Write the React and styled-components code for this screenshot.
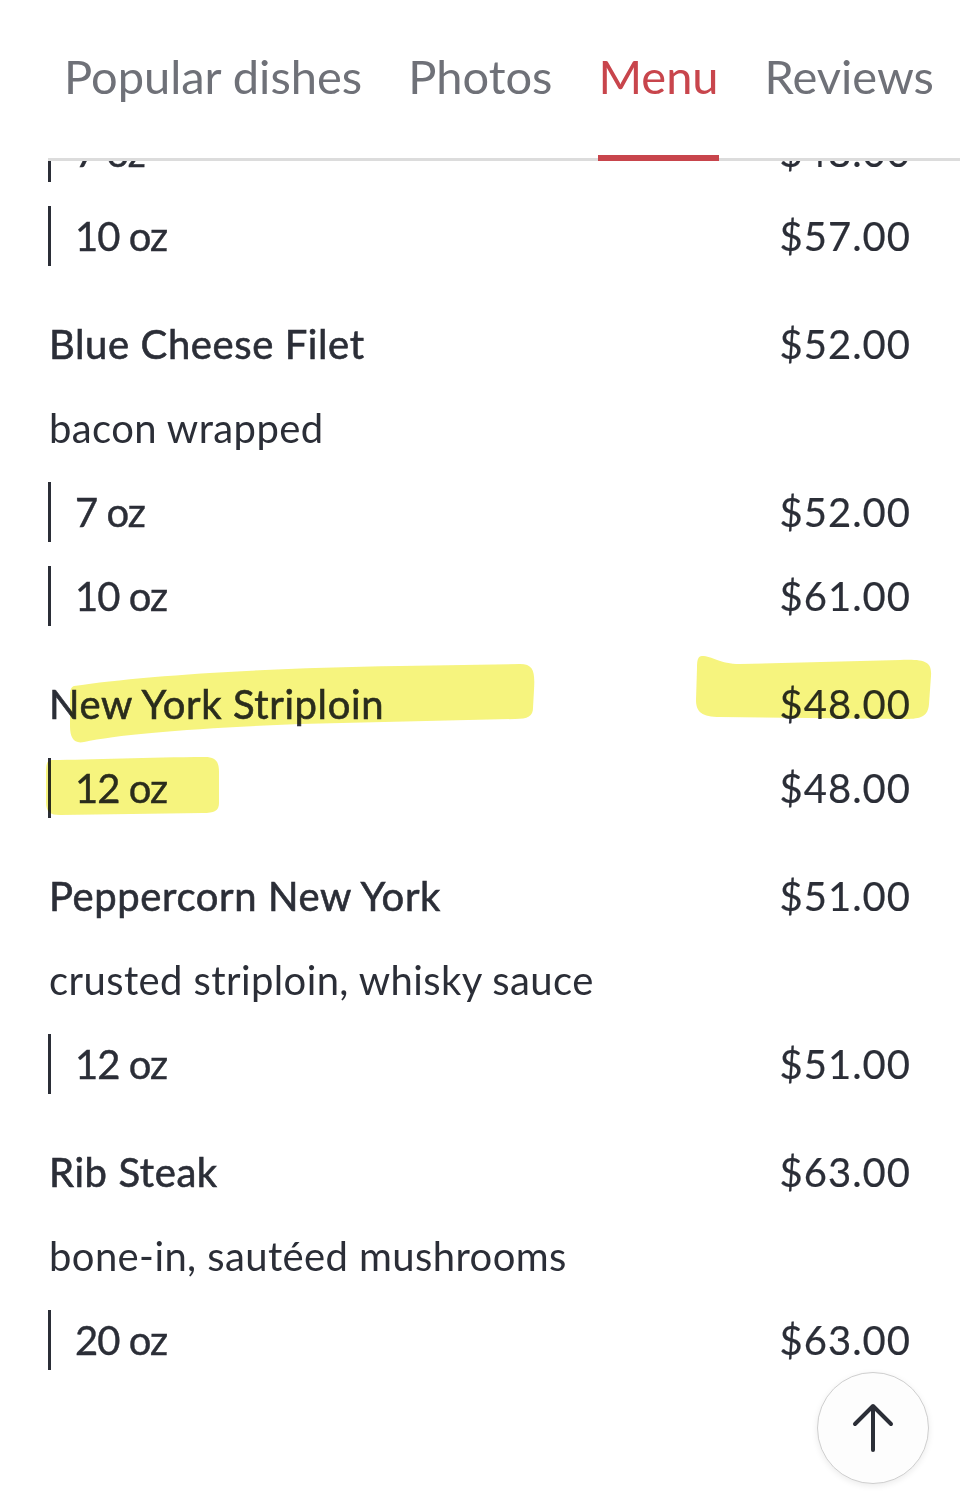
import React from "react";
import styled, { createGlobalStyle } from "styled-components";

const GlobalStyle = createGlobalStyle`
    html, body {
        margin: 0;
        padding: 0;
        background: #ffffff;
    }
    body {
        font-family: Lato, "Noto Sans", "Liberation Sans", sans-serif;
        -webkit-font-smoothing: antialiased;
    }
`;

const Colors = {
    text: "#2b2e37",
    tab: "#6f7178",
    red: "#c8454c",
    line: "#dcdcdc",
    highlight: "#f4f15e",
};

const StyledPage = styled.div`
    position: relative;
    width: 960px;
    height: 1500px;
    overflow: hidden;
    display: flex;
    flex-direction: column;
    background: #ffffff;
`;

const StyledTabStrip = styled.div`
    margin-left: 48px;
    height: 158px;
    padding-left: 16px;
    border-bottom: 3px solid ${Colors.line};
    display: flex;
    gap: 46px;
    white-space: nowrap;
    flex-shrink: 0;
`;

const StyledTab = styled.div`
    box-sizing: border-box;
    height: 161px;
    margin-bottom: -3px;
    padding-top: 53px;
    font-size: 47px;
    line-height: 1;
    color: ${(props) => (props.$active ? Colors.red : Colors.tab)};
    border-bottom: 6px solid ${(props) => (props.$active ? Colors.red : "transparent")};
`;

const StyledScroller = styled.div`
    flex-grow: 1;
    overflow: hidden;
`;

const StyledMenuList = styled.div`
    margin-top: -51px;
    padding: 0 50px 0 48px;
    display: flex;
    flex-direction: column;
    gap: 24px;
`;

const StyledItem = styled.div`
    display: flex;
    flex-direction: column;
`;

const StyledRow = styled.div`
    height: 84px;
    display: flex;
    align-items: center;
    justify-content: space-between;
    font-size: 40px;
    color: ${Colors.text};
`;

const StyledTitle = styled.span`
    padding-left: 1px;
    letter-spacing: 0.6px;
    -webkit-text-stroke: 0.6px ${Colors.text};
`;

const StyledDesc = styled.span`
    padding-left: 1px;
    letter-spacing: 0.4px;
`;

const StyledOption = styled.span`
    display: flex;
    align-items: center;
    letter-spacing: -1px;
    -webkit-text-stroke: 0.4px ${Colors.text};

    .bar {
        width: 3px;
        height: 60px;
        background: ${Colors.text};
        margin-right: 24px;
    }
`;

const StyledPrice = styled.span`
    letter-spacing: 1px;
    margin-right: -1px;
    -webkit-text-stroke: 0.2px ${Colors.text};
`;

const StyledHighlights = styled.svg`
    position: absolute;
    left: 0;
    top: 0;
    pointer-events: none;
    mix-blend-mode: multiply;
    opacity: 0.8;
`;

const StyledTopButton = styled.button`
    position: absolute;
    right: 31px;
    bottom: 16px;
    width: 112px;
    height: 112px;
    border-radius: 50%;
    border: 1.5px solid #cfcfcf;
    background: #fdfdfd;
    box-shadow: 0 2px 6px rgba(0, 0, 0, 0.08);
    display: flex;
    align-items: center;
    justify-content: center;
    padding: 0;
`;

const tabs = ["Popular dishes", "Photos", "Menu", "Reviews"];

const items = [
    { id: 0, options: [["7 oz", "$48.00"], ["10 oz", "$57.00"]] },
    {
        id: 1,
        title: "Blue Cheese Filet",
        price: "$52.00",
        desc: "bacon wrapped",
        options: [["7 oz", "$52.00"], ["10 oz", "$61.00"]],
    },
    { id: 2, title: "New York Striploin", price: "$48.00", options: [["12 oz", "$48.00"]] },
    {
        id: 3,
        title: "Peppercorn New York",
        price: "$51.00",
        desc: "crusted striploin, whisky sauce",
        options: [["12 oz", "$51.00"]],
    },
    {
        id: 4,
        title: "Rib Steak",
        price: "$63.00",
        desc: "bone-in, sautéed mushrooms",
        options: [["20 oz", "$63.00"]],
    },
];

const MenuItem = ({ item }) => (
    <StyledItem>
        {item.title && (
            <StyledRow>
                <StyledTitle>{item.title}</StyledTitle>
                <StyledPrice>{item.price}</StyledPrice>
            </StyledRow>
        )}
        {item.desc && (
            <StyledRow>
                <StyledDesc>{item.desc}</StyledDesc>
            </StyledRow>
        )}
        {item.options.map(([size, price]) => (
            <StyledRow key={size}>
                <StyledOption>
                    <div className="bar" />
                    {size}
                </StyledOption>
                <StyledPrice>{price}</StyledPrice>
            </StyledRow>
        ))}
    </StyledItem>
);

// marker strokes drawn over the striploin rows
const Highlights = () => (
    <StyledHighlights width="960" height="1500" viewBox="0 0 960 1500">
        <path
            d="M74 686 C140 676 260 668 400 666 L520 664 C534 664 535 672 534 690 L533 708 C533 716 528 719 515 719 L300 724 C200 728 120 734 84 742 C74 744 70 738 70 726 L70 696 C70 690 71 687 74 686 Z"
            fill={Colors.highlight}
        />
        <path
            d="M702 656 C712 656 720 664 740 664 L900 660 C926 659 932 662 931 676 L929 704 C928 716 922 719 905 719 L720 717 C702 717 696 712 696 700 L697 668 C697 660 698 656 702 656 Z"
            fill={Colors.highlight}
        />
        <path
            d="M52 760 C90 760 150 757 205 757 C216 757 219 762 219 772 L219 803 C219 811 214 813 203 813 L60 815 C50 815 46 812 46 802 L46 772 C46 764 47 760 52 760 Z"
            fill={Colors.highlight}
        />
    </StyledHighlights>
);

const App = () => {
    return (
        <StyledPage>
            <GlobalStyle />
            <StyledTabStrip>
                {tabs.map((tab) => (
                    <StyledTab key={tab} $active={tab === "Menu"}>
                        {tab}
                    </StyledTab>
                ))}
            </StyledTabStrip>
            <StyledScroller>
                <StyledMenuList>
                    {items.map((item) => (
                        <MenuItem key={item.id} item={item} />
                    ))}
                </StyledMenuList>
            </StyledScroller>
            <Highlights />
            <StyledTopButton aria-label="Back to top">
                <svg width="48" height="52" viewBox="0 0 48 52" fill="none">
                    <path
                        d="M24 48 V4 M6 22 L24 4 L42 22"
                        stroke={Colors.text}
                        strokeWidth="4"
                        strokeLinecap="round"
                        strokeLinejoin="round"
                    />
                </svg>
            </StyledTopButton>
        </StyledPage>
    );
};

export default App;
